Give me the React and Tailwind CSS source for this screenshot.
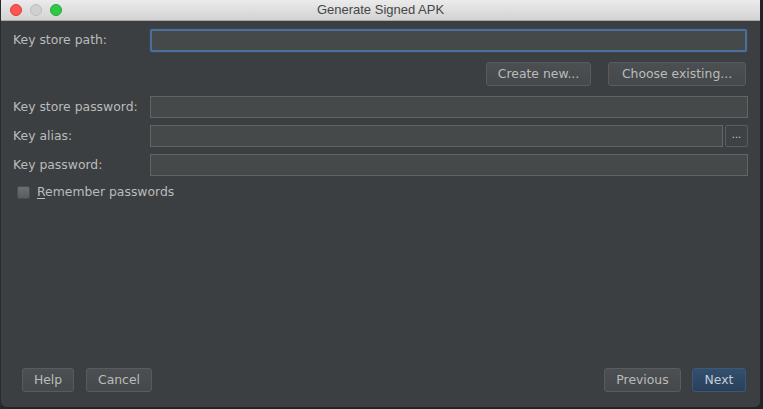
import React from "react";

const font = { fontFamily: '"Lucida Grande", "DejaVu Sans", "Liberation Sans", sans-serif' };

function Btn({ children, className = "", primary = false }) {
  return (
    <div
      className={
        "h-[24px] flex items-center justify-center rounded-[3px] border text-[12.4px] " +
        (primary
          ? "border-[#3e5677] bg-gradient-to-b from-[#32506f] to-[#2a405a] text-[#c3ccd6] "
          : "border-[#585c5e] bg-gradient-to-b from-[#4b4f51] to-[#45494b] text-[#bbbbbb] ") +
        className
      }
    >
      {children}
    </div>
  );
}

function Field({ className = "" }) {
  return <div className={"h-[22px] bg-[#45494a] border border-[#646464] " + className} />;
}

export default function App() {
  return (
    <div className="w-[763px] h-[409px] bg-[#232426] flex" style={font}>
      <div className="w-[1px] h-full bg-[#2a2a30]" />
      <div className="w-[759px] h-[407px] bg-[#3c3f41] rounded-b-[5px] flex flex-col overflow-hidden">
        <div className="h-[21px] shrink-0 bg-gradient-to-b from-[#ebebeb] to-[#d3d3d3] border-b border-[#a9a9a9] relative flex items-center justify-center">
          <div className="absolute left-[9px] top-[4px] flex gap-[8px]">
            <div className="w-[12px] h-[12px] rounded-full bg-[#fc5753] border border-[#df3d3a]" />
            <div className="w-[12px] h-[12px] rounded-full bg-[#d0d0d0] border border-[#bdbdbd]" />
            <div className="w-[12px] h-[12px] rounded-full bg-[#33c748] border border-[#1faa33]" />
          </div>
          <span className="text-[13px] text-[#474747]" style={{ fontFamily: '"Liberation Sans", "Helvetica Neue", sans-serif' }}>
            Generate Signed APK
          </span>
        </div>

        <div className="flex-1 flex flex-col pl-[12px] pr-[12px] pt-[8px] pb-[15px] text-[12.4px] text-[#bbbbbb]">
          <div className="flex items-center h-[23px]">
            <div className="w-[137px]">Key store path:</div>
            <div className="flex-1 h-[23px] bg-[#45494a] border-2 border-[#4b6f99] rounded-[2px] mr-[1px] shadow-[0_0_2px_#3d5a7c]" />
          </div>

          <div className="flex justify-end gap-[17px] mt-[10px] pr-[2px]">
            <Btn className="w-[105px]">Create new...</Btn>
            <Btn className="w-[138px]">Choose existing...</Btn>
          </div>

          <div className="flex flex-col gap-[7px] mt-[10px]">
            <div className="flex items-center">
              <div className="w-[137px]">Key store password:</div>
              <Field className="flex-1" />
            </div>
            <div className="flex items-center">
              <div className="w-[137px]">Key alias:</div>
              <Field className="flex-1" />
              <div className="ml-[2px] w-[23px] h-[22px] border border-[#5a5d5f] bg-[#3e4244] rounded-[2px] flex items-center justify-center text-[10px] leading-none text-[#cccccc] pb-[2px]">
                ...
              </div>
            </div>
            <div className="flex items-center">
              <div className="w-[137px]">Key password:</div>
              <Field className="flex-1" />
            </div>
          </div>

          <div className="flex items-center mt-[7px] ml-[4px]">
            <div className="w-[13px] h-[13px] rounded-[2px] border border-[#4a4d4f] bg-gradient-to-b from-[#6c6f71] to-[#5a5d5f]" />
            <span className="ml-[7px]">
              <span className="underline underline-offset-2">R</span>emember passwords
            </span>
          </div>

          <div className="flex-1" />

          <div className="flex items-center">
            <Btn className="ml-[9px] w-[52px]">Help</Btn>
            <Btn className="ml-[12px] w-[66px]">Cancel</Btn>
            <div className="flex-1" />
            <Btn className="w-[77px]">Previous</Btn>
            <Btn primary className="ml-[11px] w-[54px] mr-[2px]">Next</Btn>
          </div>
        </div>
      </div>
    </div>
  );
}
